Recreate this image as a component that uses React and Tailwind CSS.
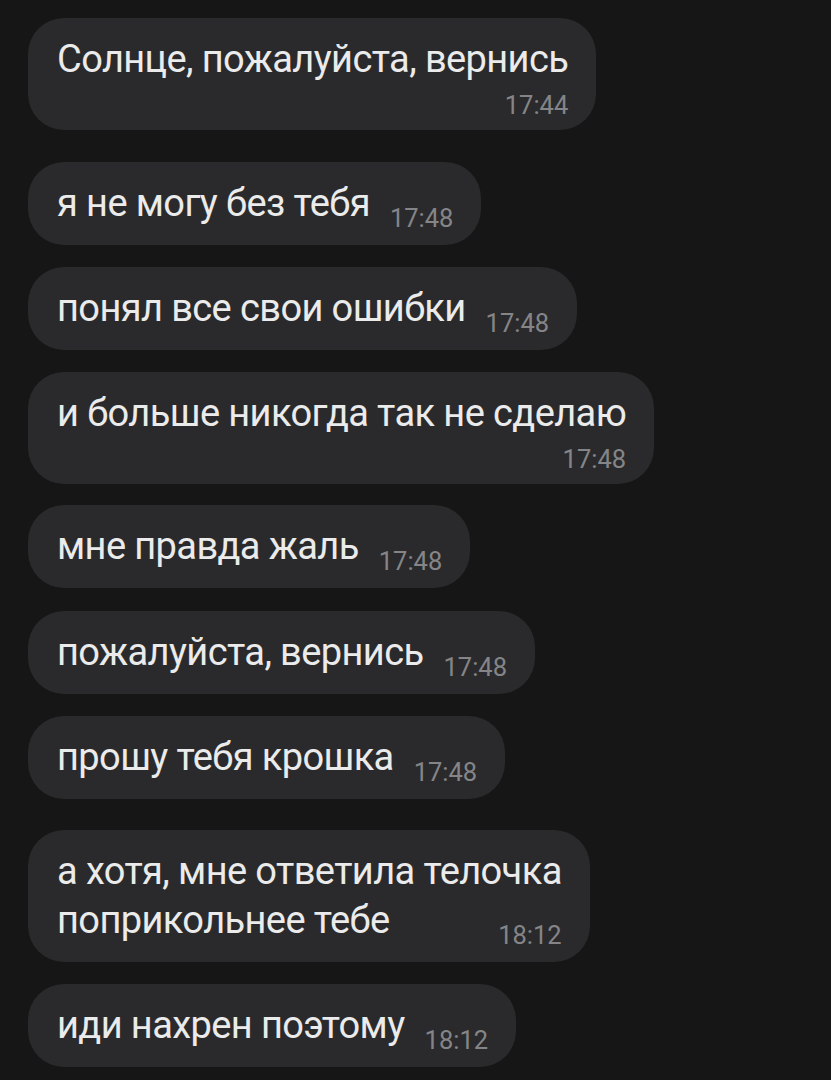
import React from "react";

const messages = [
  { lines: ["Солнце, пожалуйста, вернись"], time: "17:44", inline: false, mt: "mt-[18px]" },
  { lines: ["я не могу без тебя"], time: "17:48", inline: true, mt: "mt-[32px]" },
  { lines: ["понял все свои ошибки"], time: "17:48", inline: true, mt: "mt-[22px]" },
  { lines: ["и больше никогда так не сделаю"], time: "17:48", inline: false, mt: "mt-[22px]" },
  { lines: ["мне правда жаль"], time: "17:48", inline: true, mt: "mt-[21px]" },
  { lines: ["пожалуйста, вернись"], time: "17:48", inline: true, mt: "mt-[23px]" },
  { lines: ["прошу тебя крошка"], time: "17:48", inline: true, mt: "mt-[22px]" },
  { lines: ["а хотя, мне ответила телочка", "поприкольнее тебе"], time: "18:12", inline: true, mt: "mt-[31px]" },
  { lines: ["иди нахрен поэтому"], time: "18:12", inline: true, mt: "mt-[22px]" },
];

function Bubble({ m }) {
  const last = m.lines[m.lines.length - 1];
  const before = m.lines.slice(0, -1);
  const textCls = "text-[38px] leading-[49px] tracking-[-0.6px] text-[#ebebeb] whitespace-nowrap";
  const timeCls = "text-[25.5px] leading-[30px] text-[#858588] whitespace-nowrap";
  return (
    <div className={`${m.mt} self-start bg-[#2a2a2c] rounded-[36px] pl-[29px] pr-[28px] pt-[17px] ${m.inline ? "pb-[17px]" : "pb-[10px]"}`}>
      {before.map((l, i) => (
        <div key={i} className={textCls}>{l}</div>
      ))}
      {m.inline ? (
        <div className="flex items-baseline justify-between">
          <span className={textCls}>{last}</span>
          <span className={`ml-[20px] translate-y-[11px] ${timeCls}`}>{m.time}</span>
        </div>
      ) : (
        <>
          <div className={textCls}>{last}</div>
          <div className="mt-[6px] flex justify-end">
            <span className={timeCls}>{m.time}</span>
          </div>
        </>
      )}
    </div>
  );
}

export default function App() {
  return (
    <div className="w-[831px] h-[1080px] overflow-hidden bg-[#161616] flex flex-col pl-[28px]" style={{ fontFamily: "Roboto, 'Noto Sans', sans-serif" }}>
      {messages.map((m, i) => (
        <Bubble key={i} m={m} />
      ))}
    </div>
  );
}
